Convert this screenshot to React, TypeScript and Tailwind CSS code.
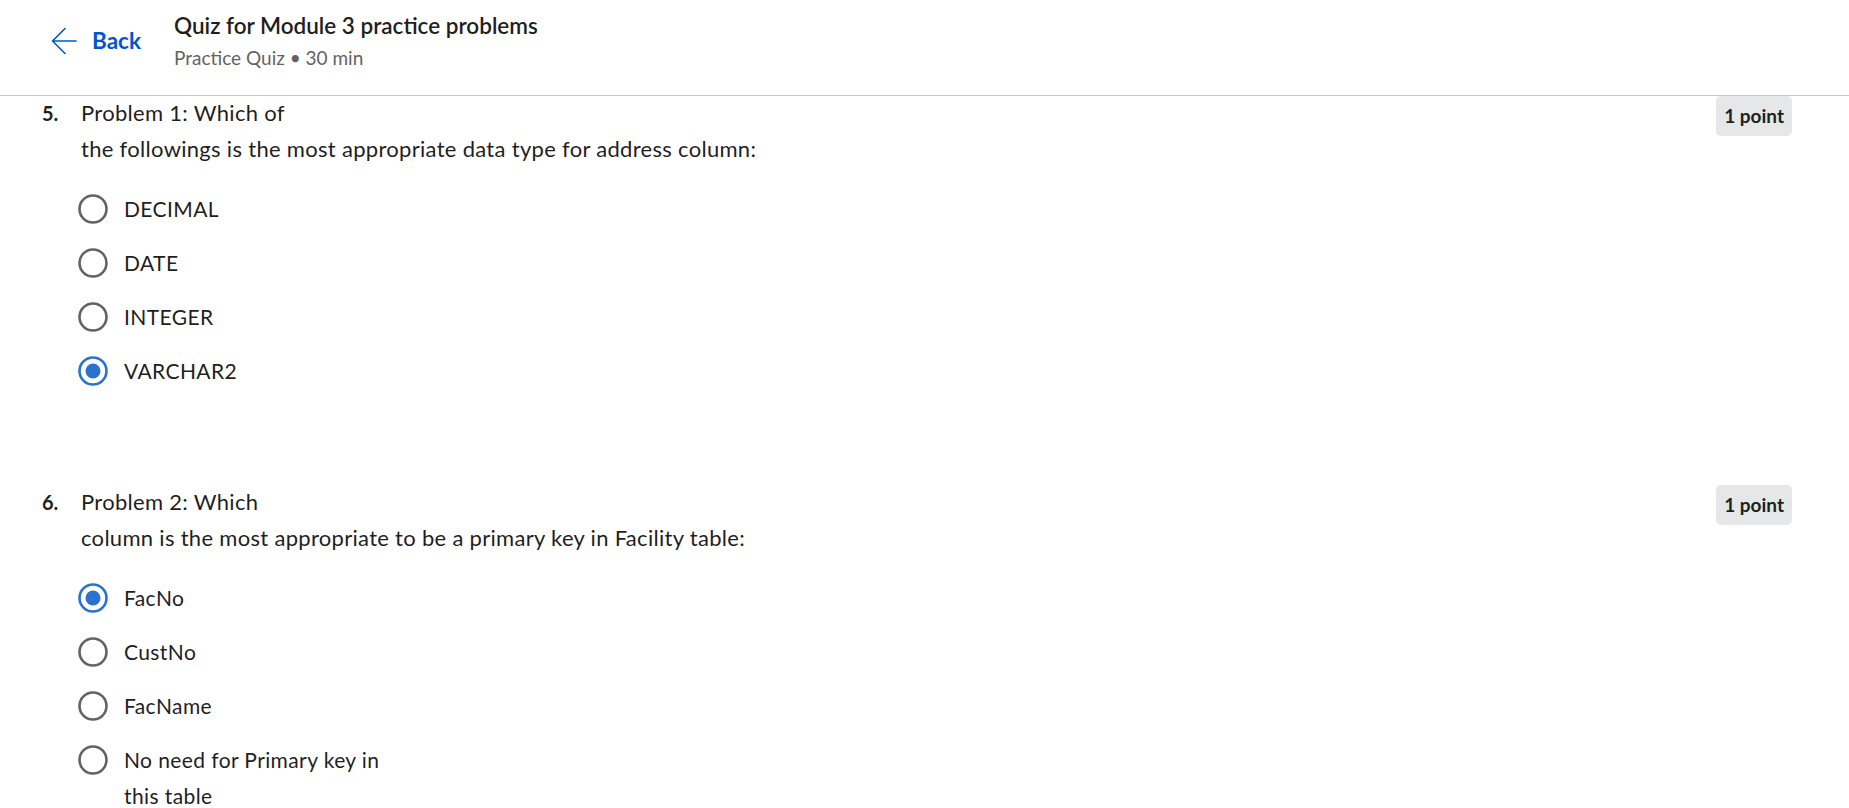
import React from 'react';

type Option = { label: string; checked?: boolean };

type Question = {
  number: number;
  lines: string[];
  options: Option[];
};

const questions: Question[] = [
  {
    number: 5,
    lines: ['Problem 1: Which of', 'the followings is the most appropriate data type for address column:'],
    options: [{ label: 'DECIMAL' }, { label: 'DATE' }, { label: 'INTEGER' }, { label: 'VARCHAR2', checked: true }],
  },
  {
    number: 6,
    lines: ['Problem 2: Which', 'column is the most appropriate to be a primary key in Facility table:'],
    options: [
      { label: 'FacNo', checked: true },
      { label: 'CustNo' },
      { label: 'FacName' },
      { label: 'No need for Primary key in this table' },
    ],
  },
];

function Radio({ checked }: { checked?: boolean }) {
  if (checked) {
    return (
      <svg width="30" height="30" viewBox="0 0 30 30" className="shrink-0">
        <circle cx="15" cy="15" r="13.5" fill="none" stroke="#2a73cc" strokeWidth="2.6" />
        <circle cx="15" cy="15" r="7.5" fill="#2a73cc" />
      </svg>
    );
  }
  return (
    <svg width="30" height="30" viewBox="0 0 30 30" className="shrink-0">
      <circle cx="15" cy="15" r="13.5" fill="none" stroke="#636363" strokeWidth="2.6" />
    </svg>
  );
}

function QuestionBlock({ q }: { q: Question }) {
  return (
    <section>
      <div className="flex items-start justify-between">
        <div className="flex pt-[2px]">
          <span className="w-[39px] shrink-0 text-[20px] leading-[30px] font-bold text-[#1f1f1f]">{q.number}.</span>
          <div className="text-[22px] tracking-[0.3px] leading-[30px] text-[#1f1f1f]">
            <p>{q.lines[0]}</p>
            <p className="mt-[6px]">{q.lines[1]}</p>
          </div>
        </div>
        <span className="h-[40px] px-[8px] flex items-center rounded-[5px] bg-[#e5e7e8] text-[19px] font-bold text-[#1f1f1f]">
          1 point
        </span>
      </div>

      {/* Options */}
      <div className="mt-[27px] pl-[36px] flex flex-col gap-[18px]">
        {q.options.map((o) => (
          <label key={o.label} className="flex items-start gap-[16px] cursor-pointer">
            <span className="h-[36px] flex items-center">
              <Radio checked={o.checked} />
            </span>
            <span className="max-w-[285px] text-[21px] tracking-[0.4px] leading-[36px] text-[#1f1f1f]">{o.label}</span>
          </label>
        ))}
      </div>
    </section>
  );
}

export default function App() {
  return (
    <div className="min-h-screen bg-white font-['Lato','Open_Sans',sans-serif] overflow-hidden">
      {/* Header */}
      <header className="h-[96px] border-b border-[#c8c8c8] flex items-start pt-[12px]">
        <a href="#" className="mt-[14px] ml-[51px] w-[123px] shrink-0 h-[30px] flex items-center gap-[15px] text-[#0056d2]">
          <svg width="26" height="28" viewBox="0 0 26 28" fill="none" stroke="#0056d2" strokeWidth="1.6" strokeLinecap="round" strokeLinejoin="round">
            <path d="M25 14H1.5M14 1.5L1.5 14L14 26.5" />
          </svg>
          <span className="text-[22.5px] font-bold leading-[30px]">Back</span>
        </a>
        <div>
          <h1 className="text-[22.5px] leading-[28px] font-semibold text-[#1f1f1f]">Quiz for Module 3 practice problems</h1>
          <p className="mt-[6px] text-[19px] leading-[24px] text-[#636363]">Practice Quiz • 30 min</p>
        </div>
      </header>

      <main className="pl-[42px] pr-[57px] flex flex-col gap-[96px]">
        {questions.map((q) => (
          <QuestionBlock key={q.number} q={q} />
        ))}
      </main>
    </div>
  );
}
